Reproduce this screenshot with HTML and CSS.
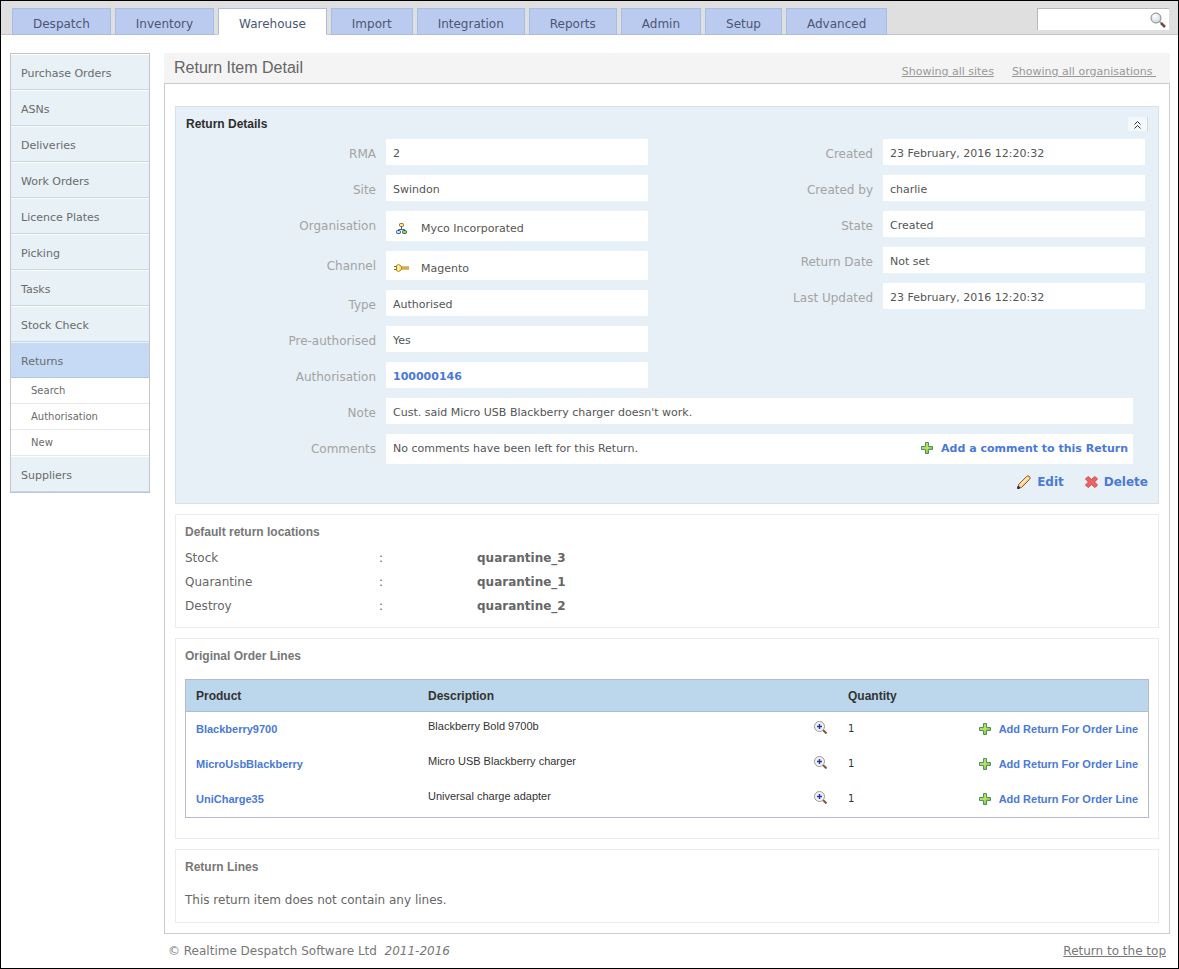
FILE: index.html
```html
<!DOCTYPE html>
<html lang="en">

<head>
    <title>Return Item Detail</title>
    <meta charset="UTF-8">
    <link rel="stylesheet" href="styles.css">
</head>

<body>
    <!-- shared icons -->
    <svg class="sprite" aria-hidden="true">
        <defs>
            <linearGradient id="green" x1="0" y1="0" x2="1" y2="1">
                <stop offset="0" stop-color="#9ad66a" />
                <stop offset="0.5" stop-color="#c6de58" />
                <stop offset="1" stop-color="#5f9c35" />
            </linearGradient>
            <radialGradient id="lens" cx="0.4" cy="0.35" r="0.7">
                <stop offset="0" stop-color="#ffffff" />
                <stop offset="1" stop-color="#c3d3ea" />
            </radialGradient>
            <symbol id="icon-plus" viewBox="0 0 12 12">
                <path d="M4.5 0.5h3v4h4v3h-4v4h-3v-4h-4v-3h4z" fill="url(#green)" stroke="#42966a" />
            </symbol>
            <symbol id="icon-zoom" viewBox="0 0 13 13">
                <path d="M9 9l3.5 3.5" stroke="#7a5a48" stroke-width="2" />
                <circle cx="5.5" cy="5.5" r="5" fill="#eef3fb" stroke="#a39a80" />
                <path d="M5.5 3v5M3 5.5h5" stroke="#2334a8" stroke-width="1.4" />
            </symbol>
        </defs>
    </svg>

    <header class="topbar">
        <nav class="tabs">
            <a href="#">Despatch</a>
            <a href="#">Inventory</a>
            <a href="#" class="active">Warehouse</a>
            <a href="#">Import</a>
            <a href="#">Integration</a>
            <a href="#">Reports</a>
            <a href="#">Admin</a>
            <a href="#">Setup</a>
            <a href="#">Advanced</a>
        </nav>
        <form class="search">
            <input type="text" aria-label="Search">
            <button type="submit" aria-label="Search">
                <svg width="16" height="16" viewBox="0 0 16 16">
                    <path d="M9.5 9.5l2 2" stroke="#9a9a9a" stroke-width="1.5" />
                    <path d="M11 11l4 4" stroke="#6f4a42" stroke-width="2.5" />
                    <circle cx="6" cy="6" r="5" fill="url(#lens)" stroke="#8f8b7c" />
                </svg>
            </button>
        </form>
    </header>

    <div class="wrapper">
        <nav class="sidebar">
            <a href="#">Purchase Orders</a>
            <a href="#">ASNs</a>
            <a href="#">Deliveries</a>
            <a href="#">Work Orders</a>
            <a href="#">Licence Plates</a>
            <a href="#">Picking</a>
            <a href="#">Tasks</a>
            <a href="#">Stock Check</a>
            <a href="#" class="active">Returns</a>
            <div class="submenu">
                <a href="#">Search</a>
                <a href="#">Authorisation</a>
                <a href="#">New</a>
            </div>
            <a href="#">Suppliers</a>
        </nav>

        <main class="main">
            <div class="title-bar">
                <h1>Return Item Detail</h1>
                <div class="filters">
                    <a href="#">Showing all sites</a>
                    <a href="#">Showing all organisations&nbsp;</a>
                </div>
            </div>

            <div class="content">
                <section class="details">
                    <div class="details-header">
                        <h2>Return Details</h2>
                        <button type="button" class="collapse" aria-label="Collapse">
                            <svg width="7" height="8" viewBox="0 0 7 8">
                                <path d="M0.5 3.5l3-3l3 3M0.5 7.5l3-3l3 3" fill="none" stroke="#333" />
                            </svg>
                        </button>
                    </div>
                    <div class="columns">
                        <dl class="fields">
                            <div><dt>RMA</dt><dd>2</dd></div>
                            <div><dt>Site</dt><dd>Swindon</dd></div>
                            <div>
                                <dt>Organisation</dt>
                                <dd class="with-icon">
                                    <svg width="15" height="12" viewBox="0 0 15 12">
                                        <path d="M7.5 4v2M4.5 8.500v-2h6v2" fill="none" stroke="#3a5fa8" />
                                        <rect x="5.5" y="0.5" width="4" height="3" rx="1" fill="#ffe39a" stroke="#8f6a14" />
                                        <rect x="2.5" y="7.5" width="4" height="3" rx="1" fill="#c4dcf8" stroke="#2f5298" />
                                        <rect x="8.5" y="7.5" width="4" height="3" rx="1" fill="#8fd08a" stroke="#1f6a34" />
                                    </svg>
                                    Myco Incorporated
                                </dd>
                            </div>
                            <div>
                                <dt>Channel</dt>
                                <dd class="with-icon channel">
                                    <svg width="15" height="8" viewBox="0 0 15 8">
                                        <path d="M0 2.5h3M0 5.5h3" stroke="#8a6a10" />
                                        <path d="M7 4h8" stroke="#a8800c" stroke-width="3" />
                                        <path d="M7 4h8" stroke="#ffe262" />
                                        <path d="M2.5 1.5l2-1l2 1l1 2v1l-1 2l-2 1l-2-1z" fill="#ffe680" stroke="#a8800c" />
                                        <path d="M4.5 1v6" stroke="#fff6cc" />
                                    </svg>
                                    Magento
                                </dd>
                            </div>
                            <div><dt>Type</dt><dd>Authorised</dd></div>
                            <div><dt>Pre-authorised</dt><dd>Yes</dd></div>
                            <div><dt>Authorisation</dt><dd><a href="#">100000146</a></dd></div>
                        </dl>
                        <dl class="fields">
                            <div><dt>Created</dt><dd>23 February, 2016 12:20:32</dd></div>
                            <div><dt>Created by</dt><dd>charlie</dd></div>
                            <div><dt>State</dt><dd>Created</dd></div>
                            <div><dt>Return Date</dt><dd>Not set</dd></div>
                            <div><dt>Last Updated</dt><dd>23 February, 2016 12:20:32</dd></div>
                        </dl>
                    </div>
                    <dl class="fields wide">
                        <div><dt>Note</dt><dd>Cust. said Micro USB Blackberry charger doesn't work.</dd></div>
                        <div>
                            <dt>Comments</dt>
                            <dd class="comments">
                                No comments have been left for this Return.
                                <a href="#" class="add"><svg width="12" height="12"><use href="#icon-plus" /></svg>Add a comment to this Return</a>
                            </dd>
                        </div>
                    </dl>
                    <div class="actions">
                        <a href="#">
                            <svg width="14" height="14" viewBox="0 0 14 14">
                                <path d="M1.5 9.5l8-8q1.500-1.500 3 0q1.500 1.500 0 3l-8 8l-3.500 1z" fill="#f8c98a" stroke="#a05a1c" />
                                <path d="M3.5 10l7.500-7.500" stroke="#fff0cc" stroke-width="1.5" />
                                <path d="M1.2 11l-0.700 2.500l2.500-0.700z" fill="#1c2858" stroke="#1c2858" />
                            </svg>
                            Edit
                        </a>
                        <a href="#">
                            <svg width="13" height="12" viewBox="0 0 13 12">
                                <path d="M3 0.5l3.5 3l3.5-3l2.5 2.5l-3 3l3 3l-2.5 2.5l-3.5-3l-3.5 3l-2.5-2.5l3-3l-3-3z" fill="#ee6262" stroke="#c74a48" stroke-linejoin="round" />
                            </svg>
                            Delete
                        </a>
                    </div>
                </section>

                <section class="box">
                    <h2>Default return locations</h2>
                    <table class="locations">
                        <tr><th>Stock</th><td>:</td><td>quarantine_3</td></tr>
                        <tr><th>Quarantine</th><td>:</td><td>quarantine_1</td></tr>
                        <tr><th>Destroy</th><td>:</td><td>quarantine_2</td></tr>
                    </table>
                </section>

                <section class="box">
                    <h2>Original Order Lines</h2>
                    <table class="lines">
                        <thead>
                            <tr>
                                <th class="product">Product</th>
                                <th>Description</th>
                                <th class="view"></th>
                                <th class="quantity">Quantity</th>
                                <th class="add-return"></th>
                            </tr>
                        </thead>
                        <tbody>
                            <tr>
                                <td><a href="#">Blackberry9700</a></td>
                                <td class="description">Blackberry Bold 9700b</td>
                                <td class="view"><a href="#" aria-label="View"><svg width="13" height="13"><use href="#icon-zoom" /></svg></a></td>
                                <td class="quantity">1</td>
                                <td class="add-return"><a href="#" class="add"><svg width="12" height="12"><use href="#icon-plus" /></svg>Add Return For Order Line</a></td>
                            </tr>
                            <tr>
                                <td><a href="#">MicroUsbBlackberry</a></td>
                                <td class="description">Micro USB Blackberry charger</td>
                                <td class="view"><a href="#" aria-label="View"><svg width="13" height="13"><use href="#icon-zoom" /></svg></a></td>
                                <td class="quantity">1</td>
                                <td class="add-return"><a href="#" class="add"><svg width="12" height="12"><use href="#icon-plus" /></svg>Add Return For Order Line</a></td>
                            </tr>
                            <tr>
                                <td><a href="#">UniCharge35</a></td>
                                <td class="description">Universal charge adapter</td>
                                <td class="view"><a href="#" aria-label="View"><svg width="13" height="13"><use href="#icon-zoom" /></svg></a></td>
                                <td class="quantity">1</td>
                                <td class="add-return"><a href="#" class="add"><svg width="12" height="12"><use href="#icon-plus" /></svg>Add Return For Order Line</a></td>
                            </tr>
                        </tbody>
                    </table>
                </section>

                <section class="box">
                    <h2>Return Lines</h2>
                    <p>This return item does not contain any lines.</p>
                </section>
            </div>

            <footer class="footer">
                <span>© Realtime Despatch Software Ltd&nbsp; <em>2011-2016</em></span>
                <a href="#">Return to the top</a>
            </footer>
        </main>
    </div>
</body>

</html>
```
FILE: styles.css
```css
* {
    box-sizing: border-box;
}

body {
    margin: 0;
    min-height: 100vh;
    border: 1px solid #000;
    background-color: #fff;
    color: #666;
    font-family: "DejaVu Sans", Verdana, sans-serif;
    font-size: 12px;
}

h1, h2, p, dl, dd {
    margin: 0;
}

h1, h2 {
    font-family: "Liberation Sans", Arial, sans-serif;
}

h2 {
    font-size: 12px;
    line-height: 16px;
}

a {
    color: #4a79d6;
    font-weight: bold;
    text-decoration: none;
}

svg {
    display: block;
    flex: none;
}

.sprite {
    position: absolute;
    width: 0;
    height: 0;
}

/* Top bar */
.topbar {
    display: flex;
    justify-content: space-between;
    height: 34px;
    padding: 7px 9px 0 11px;
    background-color: #dfdfdf;
    border-bottom: 1px solid #c4c4c4;
}

.tabs {
    display: flex;
    gap: 4px;
}

.tabs a {
    height: 27px;
    padding: 0 20px;
    background-color: #bbcbef;
    border: 1px solid #a6bee4;
    color: #4b5675;
    font-weight: normal;
    line-height: 30px;
}

.tabs .active {
    background-color: #fff;
    border-bottom-color: #fff;
}

.search {
    display: flex;
    width: 132px;
    height: 22px;
    background-color: #fff;
    border-top: 1px solid #b8b8b8;
    border-left: 1px solid #b8b8b8;
}

.search input {
    flex: 1;
    min-width: 0;
    padding: 0 4px;
    border: none;
    background: none;
    font: inherit;
}

.search button {
    padding: 0 3px;
    border: none;
    background: none;
    cursor: pointer;
}

/* Side menu */
.wrapper {
    display: flex;
    align-items: flex-start;
    gap: 14px;
    padding: 18px 8px 0 9px;
}

.sidebar {
    flex: none;
    width: 140px;
    border: 1px solid #c2c6cb;
    font-size: 11px;
}

.sidebar a {
    display: block;
    height: 36px;
    padding-left: 10px;
    background-color: #e7f1f6;
    border-top: 1px solid #fff;
    border-bottom: 1px solid #c5d7e8;
    color: #6b6b6b;
    font-weight: normal;
    line-height: 37px;
}

.sidebar .active {
    background-color: #c6daf6;
    border-top-color: #e7f1f6;
    border-bottom-color: #b0c5e2;
}

.sidebar .submenu a {
    height: 26px;
    padding-left: 20px;
    background-color: #fff;
    border-top: none;
    border-bottom: 1px solid #e8e8ea;
    font-size: 10px;
    line-height: 25px;
}

/* Main area */
.main {
    flex: 1;
}

.title-bar {
    display: flex;
    justify-content: space-between;
    height: 30px;
    padding: 0 14px 0 10px;
    background-color: #f4f4f4;
}

.title-bar h1 {
    font-size: 16px;
    font-weight: normal;
    line-height: 29px;
}

.filters {
    display: flex;
    gap: 18px;
    font-size: 11px;
    line-height: 37px;
}

.filters a {
    color: #999;
    font-weight: normal;
    text-decoration: underline;
}

.content {
    display: flex;
    flex-direction: column;
    gap: 10px;
    padding: 22px 10px 10px;
    border: 1px solid #ccc;
}

.details {
    padding: 9px 0 12px;
    background-color: #e7f0f6;
    border: 1px solid #d3e1ea;
}

.details-header {
    display: flex;
    justify-content: space-between;
    height: 23px;
    padding: 0 10px;
    color: #2e2e2e;
}

.collapse {
    display: flex;
    align-items: center;
    justify-content: center;
    width: 20px;
    height: 14px;
    margin-top: 1px;
    padding: 2px 0 0;
    border: none;
    border-right: 1px solid #d8d8d8;
    background-color: #f5f8fa;
    cursor: pointer;
}

.columns {
    display: flex;
    justify-content: space-between;
    padding-right: 13px;
}

.fields {
    display: flex;
    flex-direction: column;
    gap: 10px;
}

.fields > div {
    display: flex;
}

.fields dt {
    flex: none;
    width: 200px;
    color: #a3a3a3;
    line-height: 30px;
    height: 26px;
    text-align: right;
}

.fields dd {
    width: 262px;
    height: 26px;
    margin-left: 10px;
    padding-left: 7px;
    background-color: #fff;
    color: #555;
    font-size: 11px;
    line-height: 29px;
}

.fields .with-icon {
    display: flex;
    align-items: center;
    gap: 12px;
    height: 30px;
    padding-top: 5px;
    padding-left: 8px;
}

.fields .channel {
    height: 29px;
}

.fields.wide {
    margin-top: 10px;
    padding-right: 25px;
}

.wide dd {
    flex: 1;
}

.add {
    display: flex;
    align-items: center;
    gap: 8px;
}

.fields .comments {
    display: flex;
    justify-content: space-between;
    height: 30px;
    padding-right: 5px;
}

.comments .add {
    height: 28px;
}

.actions {
    display: flex;
    justify-content: flex-end;
    gap: 21px;
    padding: 9px 10px 0 0;
}

.actions a {
    display: flex;
    align-items: center;
    gap: 6px;
    line-height: 18px;
}

.box {
    padding: 9px;
    border: 1px solid #ececec;
}

.box h2 {
    color: #777;
}

.box p {
    padding: 17px 0 5px;
    line-height: 16px;
}

.locations {
    margin-top: 6px;
    border-collapse: collapse;
    line-height: 24px;
}

.locations th,
.locations td {
    padding: 0;
    text-align: left;
}

.locations th {
    width: 194px;
    font-weight: normal;
}

.locations td {
    width: 98px;
}

.locations td:last-child {
    font-weight: bold;
}

/* Order lines */
.lines {
    width: 100%;
    margin: 15px 0 11px;
    border: 1px solid #b5bad0;
    border-spacing: 0;
    table-layout: fixed;
    font-family: "Liberation Sans", Arial, sans-serif;
    font-size: 11px;
}

.lines th {
    height: 32px;
    padding: 0 10px;
    background-color: #bcd7ec;
    border-bottom: 1px solid #b0bcd6;
    color: #333;
    font-size: 12px;
    text-align: left;
}

.lines td {
    height: 35px;
    padding: 0 10px 2px;
    color: #333;
}

.lines .description {
    padding-bottom: 7px;
}

.lines .product {
    width: 232px;
}

.lines .view {
    width: 40px;
    padding: 0 0 4px 16px;
}

.lines .quantity {
    width: 110px;
}

.lines td.quantity {
    font-family: "DejaVu Sans", Verdana, sans-serif;
    font-size: 10px;
}

.lines .add-return {
    width: 200px;
}

.lines .add {
    justify-content: flex-end;
}

.footer {
    display: flex;
    justify-content: space-between;
    padding: 0 4px;
    color: #777;
    line-height: 34px;
}

.footer a {
    color: #777;
    font-weight: normal;
    text-decoration: underline;
}
```
